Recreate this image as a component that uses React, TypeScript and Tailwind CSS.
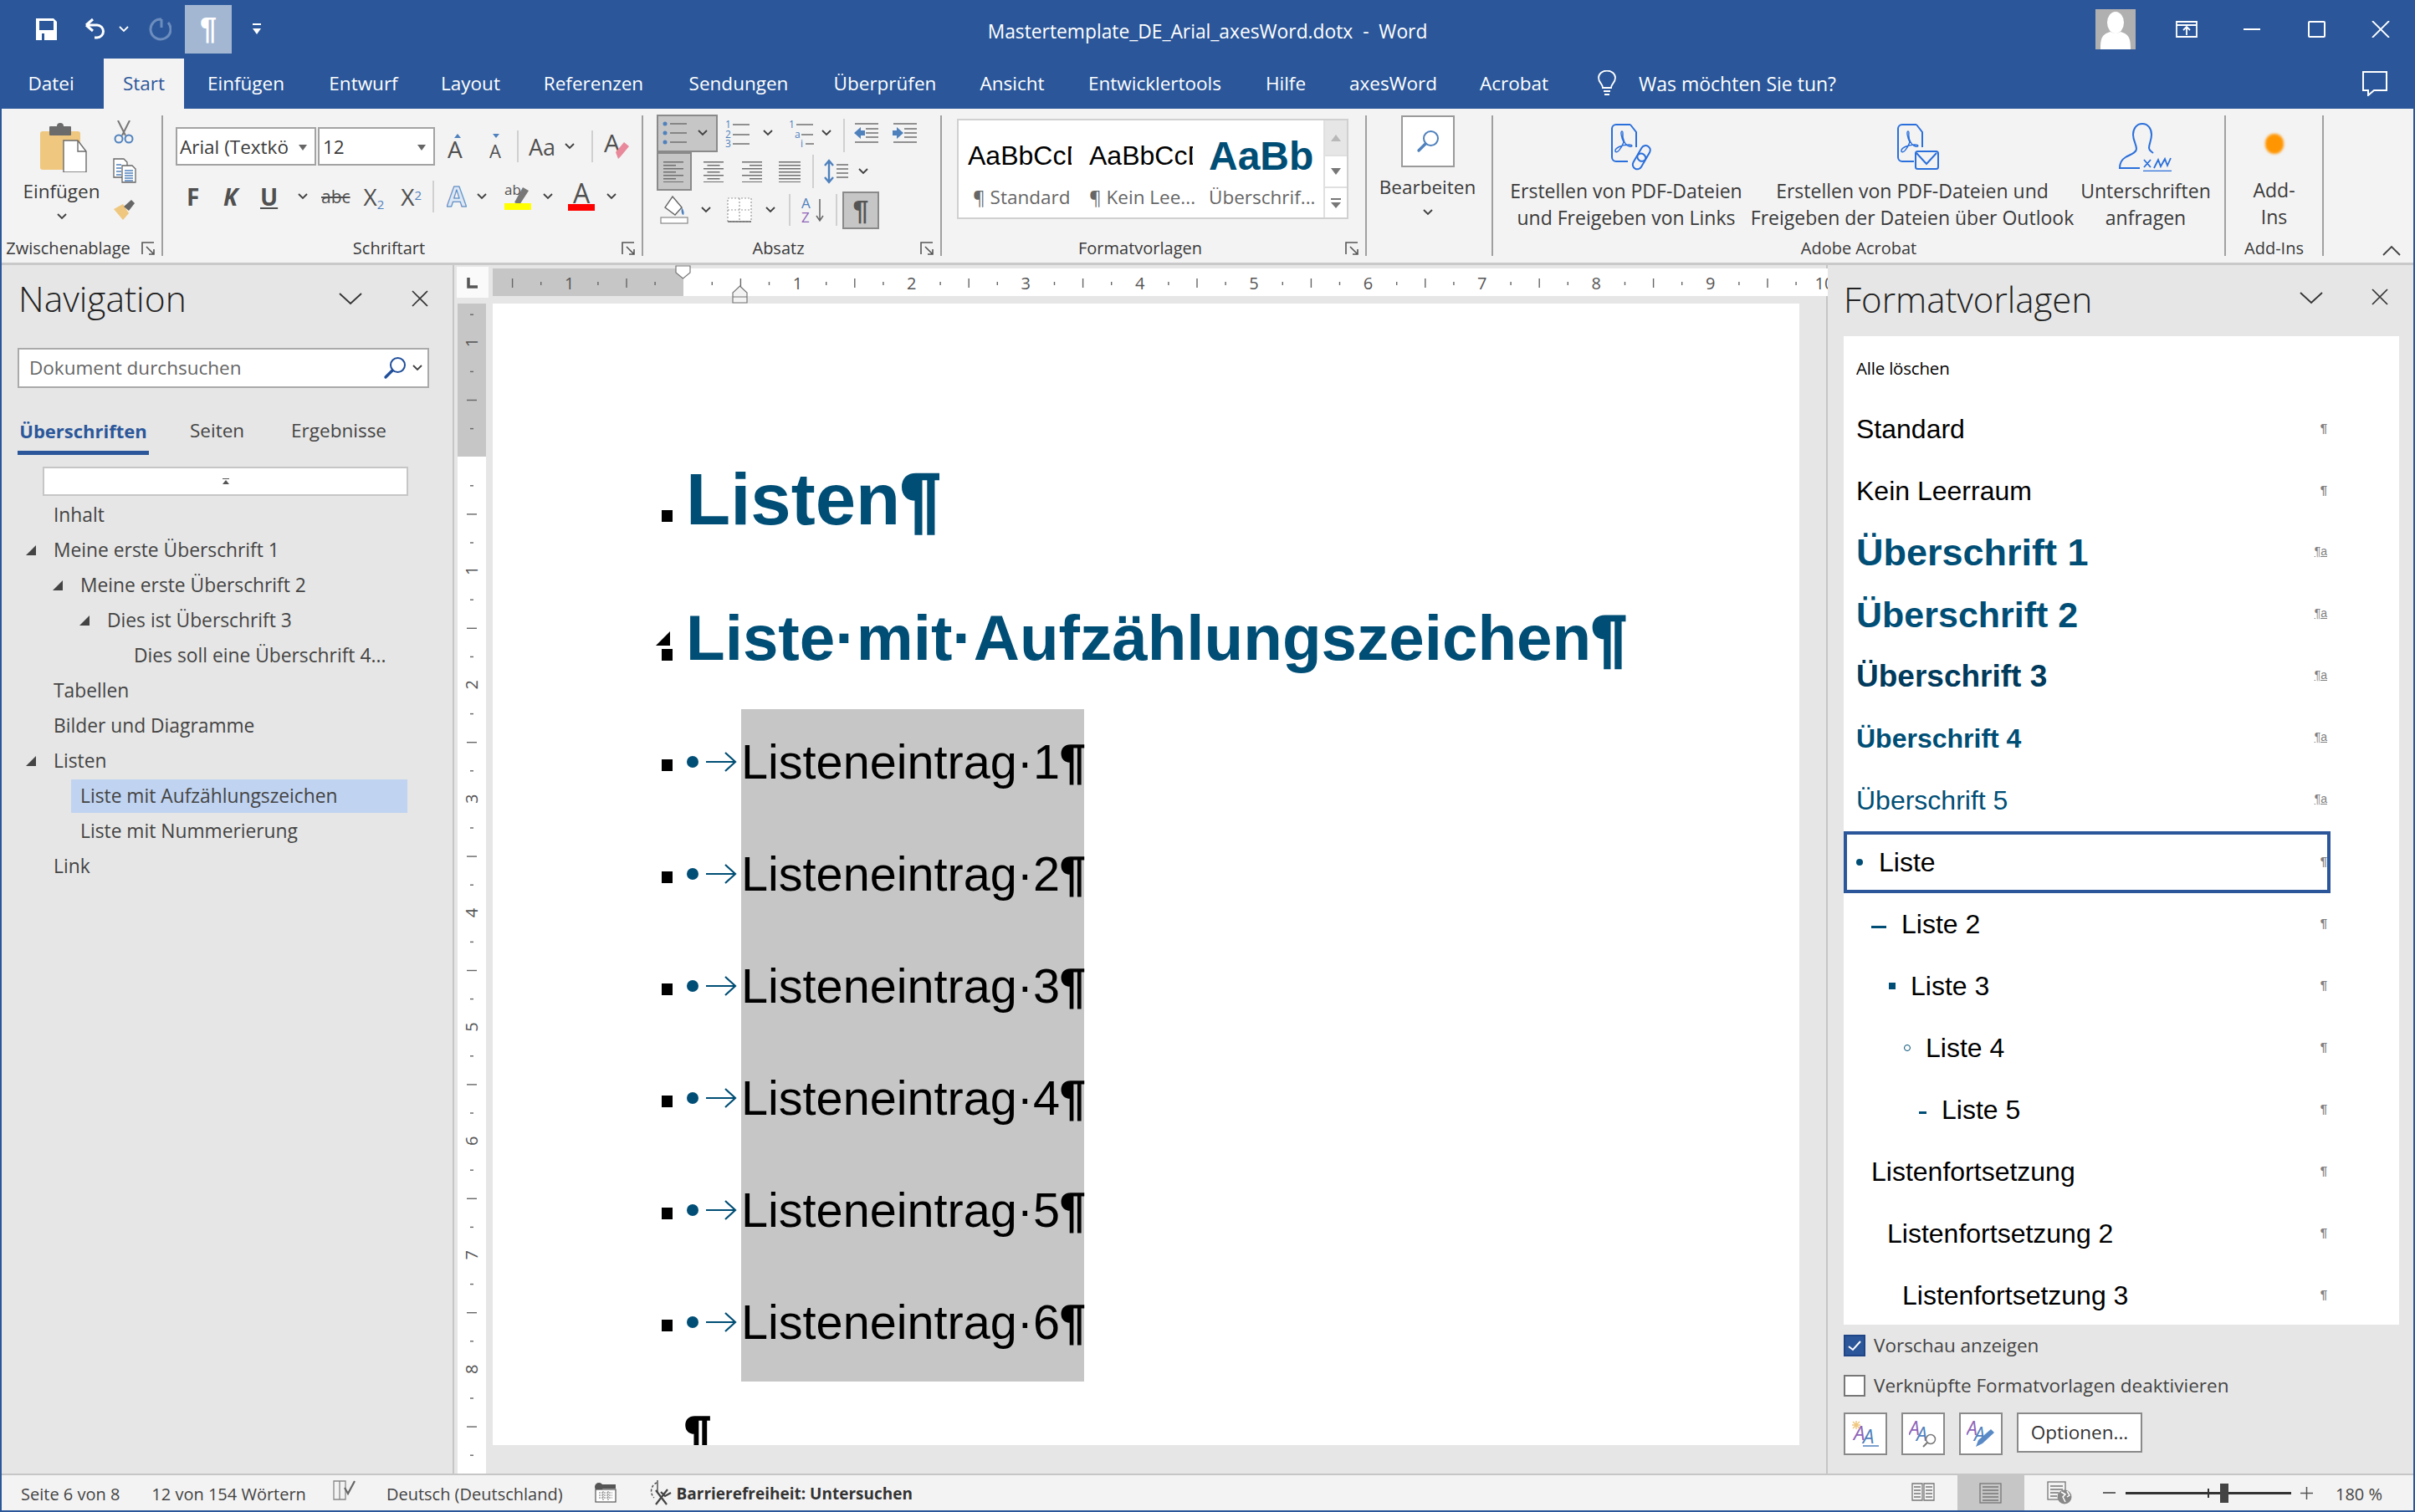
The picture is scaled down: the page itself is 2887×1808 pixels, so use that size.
import React from 'react';

const BLUE = '#2b579a';
const ICON = '#4f81bd';
const DARK = '#505050';

const Chev = ({ className = '', color = '#404040' }: { className?: string; color?: string }) => (
  <svg width="12" height="8" viewBox="0 0 12 8" className={`shrink-0 ${className}`}>
    <path d="M1 1l5 5 5-5" fill="none" stroke={color} strokeWidth="1.8" />
  </svg>
);

const Launcher = () => (
  <div className="w-[32px] flex justify-end pr-[7px]">
    <svg width="17" height="17" viewBox="0 0 17 17">
      <path d="M1 15V1h14M6 6l9 9M9 15h6V9" fill="none" stroke="#555" strokeWidth="1.6" />
    </svg>
  </div>
);

const GroupLabel = ({ text, launcher = true }: { text: string; launcher?: boolean }) => (
  <div className="mt-auto mb-[-3px] h-[24px] flex items-center">
    <div className="flex-1 text-center text-[20px] leading-[24px] whitespace-nowrap">{text}</div>
    {launcher && <Launcher />}
  </div>
);

const Lines = ({ x, ys, w, color = '#707070' }: { x: number; ys: number[]; w: number; color?: string }) => (
  <path d={ys.map((y) => `M${x} ${y}h${w}`).join('')} stroke={color} strokeWidth="1.5" fill="none" />
);

const VSep = ({ className = '' }: { className?: string }) => <div className={`w-[2px] bg-[#d0d0d0] shrink-0 ${className}`} />;

const Magnifier = ({ color = ICON }: { color?: string }) => (
  <svg width="28" height="28" viewBox="0 0 28 28">
    <circle cx="17.5" cy="10.5" r="8.5" fill="none" stroke={color} strokeWidth="2" />
    <path d="M11 17L3 25" stroke={color} strokeWidth="3.4" strokeLinecap="round" />
  </svg>
);

const Close = ({ size = 20 }: { size?: number }) => (
  <svg width={size} height={size} viewBox="0 0 20 20">
    <path d="M1 1l18 18M19 1L1 19" stroke="#333" strokeWidth="1.7" fill="none" />
  </svg>
);

const PaneChevron = () => (
  <svg width="28" height="15" viewBox="0 0 28 15">
    <path d="M1 1l13 12L27 1" stroke="#333" strokeWidth="1.8" fill="none" />
  </svg>
);

const AcrobatMark = () => (
  <path
    d="M14 9c-2 0 -1 7 2 13c-3 8 -8 14 -10 11c-1 -4 8 -8 16 -8c5 0 5 3 1 2c-5 -1 -9 -8 -8 -16c0 -2 0 -2 -1 -2z"
    fill="none"
    stroke="#2a6fdb"
    strokeWidth="1.4"
  />
);

const PdfDoc = () => (
  <path d="M24 1H7a5 5 0 0 0-5 5v34a5 5 0 0 0 5 5h14M24 1l7 9v18" fill="none" stroke="#2a6fdb" strokeWidth="2" />
);

const TitleBar = () => (
  <div className="h-[70px] grid grid-cols-[1fr_auto_1fr] items-center text-white">
    <div className="flex items-center pl-[43px]">
      <svg width="25" height="26" viewBox="0 0 25 26">
        <path d="M0 0h21l4 4v22H0z" fill="#fff" />
        <rect x="4" y="3" width="17" height="11" fill={BLUE} />
        <rect x="7" y="18" width="3" height="8" fill={BLUE} />
      </svg>
      <svg width="28" height="28" viewBox="0 0 28 28" className="ml-[32px]">
        <path d="M3 9l8-7M3 9l8 7M3 9h13a7.5 7.5 0 0 1 0 15h-3" fill="none" stroke="#fff" strokeWidth="3" />
      </svg>
      <Chev color="#fff" className="ml-[14px]" />
      <svg width="28" height="28" viewBox="0 0 28 28" className="ml-[23px]">
        <path d="M16 2a12 12 0 1 0 8 4M16 2v10" fill="none" stroke="#6c8dbd" strokeWidth="3" />
      </svg>
      <div className="ml-[16px] w-[56px] h-[58px] bg-[#a3b7d2] flex items-center justify-center font-['Liberation_Sans',sans-serif] font-bold text-[36px] leading-none">
        ¶
      </div>
      <svg width="12" height="16" viewBox="0 0 12 16" className="ml-[24px]">
        <path d="M1 1h10v2H1zM1 7h10l-5 7z" fill="#fff" />
      </svg>
    </div>
    <div className="text-[22.8px] whitespace-pre pt-[6px]">Mastertemplate_DE_Arial_axesWord.dotx  -  Word</div>
    <div className="flex items-center justify-end pr-[30px]">
      <div className="w-[48px] h-[48px] bg-[#b0b0b0] overflow-hidden">
        <svg width="48" height="48" viewBox="0 0 48 48">
          <ellipse cx="24" cy="16" rx="10" ry="13" fill="#fff" />
          <path d="M6 48c0-14 2-18 12-21c3 2 9 2 12 0c10 3 12 7 12 21z" fill="#fff" />
        </svg>
      </div>
      <svg width="26" height="20" viewBox="0 0 26 20" className="ml-[48px]">
        <path d="M1 1h24v18H1zM1 5h24M13 17V8M9 11l4-4 4 4" fill="none" stroke="#fff" strokeWidth="1.8" />
      </svg>
      <div className="ml-[55px] w-[20px] h-[2px] bg-white" />
      <div className="ml-[57px] w-[21px] h-[20px] border-2 border-white rounded-[2px]" />
      <svg width="22" height="20" viewBox="0 0 22 20" className="ml-[55px]">
        <path d="M1 0l20 20M21 0L1 20" stroke="#fff" strokeWidth="1.8" />
      </svg>
    </div>
  </div>
);

const TABS: [string, string][] = [
  ['Datei', 'w-[122px] pr-[4px]'],
  ['Start', 'w-[96px] bg-[#f3f3f3] text-[#2b579a]'],
  ['Einfügen', 'w-[148px]'],
  ['Entwurf', 'w-[133px]'],
  ['Layout', 'w-[123px]'],
  ['Referenzen', 'w-[171px]'],
  ['Sendungen', 'w-[176px]'],
  ['Überprüfen', 'w-[174px]'],
  ['Ansicht', 'w-[130px]'],
  ['Entwicklertools', 'w-[211px]'],
  ['Hilfe', 'w-[102px]'],
  ['axesWord', 'w-[155px]'],
  ['Acrobat', 'w-[134px]'],
];

const TabRow = () => (
  <div className="h-[60px] flex items-stretch pl-[2px] text-white">
    {TABS.map(([label, cls]) => (
      <div key={label} className={`flex items-center justify-center whitespace-nowrap ${cls}`}>
        {label}
      </div>
    ))}
    <div className="ml-[33px] flex items-center">
      <svg width="22" height="32" viewBox="0 0 22 32">
        <path d="M6 21c0-5-5-6-5-12a10 8.500 0 0 1 20 0c0 6-5 7-5 12zM7 25h8M8 29h6" fill="none" stroke="#fff" strokeWidth="1.8" />
      </svg>
    </div>
    <div className="ml-[27px] flex items-center whitespace-nowrap text-[23px]">Was möchten Sie tun?</div>
    <div className="ml-auto mr-[33px] flex items-center">
      <svg width="30" height="30" viewBox="0 0 30 30">
        <path d="M1 1h28v22H14l-7 6v-6H1z" fill="none" stroke="#fff" strokeWidth="2" />
      </svg>
    </div>
  </div>
);

const ClipboardGroup = () => (
  <div className="w-[193px] flex flex-col border-r-2 border-[#a0a0a0] shrink-0">
    <div className="flex">
      <div className="w-[134px] flex flex-col items-center pt-[8px] pl-[18px] pr-[1px]">
        <svg width="56" height="60" viewBox="0 0 56 60" className="-ml-[3px]">
          <rect x="0" y="11" width="48" height="46" rx="3" fill="#efc77f" />
          <rect x="11" y="5" width="26" height="11" rx="1" fill="#6b6b6b" />
          <circle cx="24" cy="5" r="4" fill="#6b6b6b" />
          <path d="M28 22h17l10 13v25H28z" fill="#fff" stroke="#6b6b6b" strokeWidth="1.4" />
          <path d="M45 22v13h10" fill="none" stroke="#6b6b6b" strokeWidth="1.4" />
        </svg>
        <div className="-ml-[8px] mt-[8px] leading-[30px]">Einfügen</div>
        <Chev className="-ml-[8px] mt-[11px]" />
      </div>
      <div className="flex flex-col items-start pt-[6px] -ml-[1px]">
        <svg width="26" height="28" viewBox="0 0 26 28">
          <path d="M6 0l9 18M20 0l-9 18" stroke="#777" strokeWidth="2" />
          <circle cx="7" cy="22" r="4.500" fill="none" stroke={ICON} strokeWidth="2" />
          <circle cx="19" cy="22" r="4.500" fill="none" stroke={ICON} strokeWidth="2" />
        </svg>
        <svg width="28" height="30" viewBox="0 0 28 30" className="mt-[17px]">
          <path d="M1 1h12l4 4v18H1z" fill="#fff" stroke="#666" strokeWidth="1.300" />
          <path d="M11 9h12l4 4v16H11z" fill="#fff" stroke="#666" strokeWidth="1.300" />
          <Lines x={4} ys={[8, 12, 16, 20]} w={6} color={ICON} />
          <Lines x={14} ys={[15, 18, 21, 24, 27]} w={10} color={ICON} />
        </svg>
        <svg width="27" height="24" viewBox="0 0 27 24" className="mt-[20px]">
          <path d="M1 11l11-6 7 11-7 8z" fill="#efc77f" />
          <path d="M13 8l9-8 4 4-7 9z" fill="#666" />
        </svg>
      </div>
    </div>
    <GroupLabel text="Zwischenablage" />
  </div>
);

const FontGroup = () => (
  <div className="w-[574px] flex flex-col border-r-2 border-[#a0a0a0] shrink-0">
    <div className="pl-[15px]">
      <div className="mt-[14px] h-[46px] flex items-center">
        <div className="w-[168px] h-[46px] bg-white border-2 border-[#a3a3a3] flex items-center justify-between pl-[3px] pr-[9px] pt-[2px] font-normal">
          <span className="whitespace-nowrap">Arial (Textkö</span>
          <svg width="10" height="7" viewBox="0 0 10 7">
            <path d="M0 0h10L5 7z" fill="#666" />
          </svg>
        </div>
        <div className="ml-[2px] w-[140px] h-[46px] bg-white border-2 border-[#a3a3a3] flex items-center justify-between pl-[4px] pr-[9px] pt-[2px]">
          <span>12</span>
          <svg width="10" height="7" viewBox="0 0 10 7">
            <path d="M0 0h10L5 7z" fill="#666" />
          </svg>
        </div>
        <svg width="20" height="34" viewBox="0 0 20 34" className="ml-[15px]">
          <path d="M12 2l4 5H8z" fill={ICON} />
          <text x="0" y="31" fontFamily="Open Sans" fontSize="28" fill={DARK}>A</text>
        </svg>
        <svg width="15" height="34" viewBox="0 0 15 34" className="ml-[30px]">
          <path d="M8 7l4-5H4z" fill={ICON} />
          <text x="0" y="31" fontFamily="Open Sans" fontSize="22" fill={DARK}>A</text>
        </svg>
        <VSep className="ml-[18px] h-[38px]" />
        <span className="ml-[12px] text-[27px] text-[#505050] leading-none">Aa</span>
        <Chev className="ml-[11px]" />
        <VSep className="ml-[20px] h-[38px]" />
        <svg width="32" height="34" viewBox="0 0 32 34" className="ml-[13px]">
          <text x="0" y="24" fontFamily="Open Sans" fontSize="30" fill={DARK}>A</text>
          <path d="M14 24l10-12 6 5-10 12-3 3z" fill="#e8889a" />
        </svg>
      </div>
      <div className="mt-[14px] h-[46px] flex items-center text-[#505050]">
        <span className="ml-[13px] w-[18px] text-[28px] font-bold font-['Open_Sans',sans-serif] leading-none">F</span>
        <span className="ml-[26px] w-[24px] text-[28px] font-bold italic leading-none">K</span>
        <span className="ml-[20px] w-[24px] text-[28px] font-bold underline underline-offset-[2px] decoration-2 leading-none">U</span>
        <Chev className="ml-[21px]" />
        <span className="ml-[16px] text-[21px] line-through leading-none">abc</span>
        <span className="ml-[16px] text-[28px] leading-none">
          X<sub className="text-[15px] text-[#4f81bd]">2</sub>
        </span>
        <span className="ml-[20px] text-[28px] leading-none">
          X<sup className="text-[15px] text-[#4f81bd]">2</sup>
        </span>
        <VSep className="ml-[13px] h-[38px]" />
        <svg width="24" height="30" viewBox="0 0 24 30" className="ml-[15px]">
          <text x="0" y="27" fontFamily="Open Sans" fontSize="34" fontWeight="700" fill="#dce8f6" stroke={ICON} strokeWidth="1">A</text>
        </svg>
        <Chev className="ml-[12px]" />
        <svg width="32" height="32" viewBox="0 0 32 32" className="ml-[21px]">
          <text x="0" y="14" fontFamily="Open Sans" fontSize="17" fill={DARK}>ab</text>
          <path d="M12 23l10-18 7 4-11 17z" fill="#777" />
          <rect x="0" y="24" width="32" height="8" fill="#ffff00" />
        </svg>
        <Chev className="ml-[14px]" />
        <div className="ml-[18px] w-[32px] h-[34px] flex flex-col items-center">
          <span className="text-[32px] leading-[26px] text-[#505050]">A</span>
          <div className="mt-auto w-[32px] h-[8px] bg-[#ff0000]" />
        </div>
        <Chev className="ml-[14px]" />
      </div>
    </div>
    <GroupLabel text="Schriftart" />
  </div>
);

const ToggleBox = ({ className, children }: { className: string; children: React.ReactNode }) => (
  <div className={`bg-[#c6c6c6] border-2 border-[#8a8a8a] flex items-center shrink-0 ${className}`}>{children}</div>
);

const AlignIcon = ({ kind, className = '' }: { kind: 'l' | 'c' | 'r' | 'j'; className?: string }) => {
  const rows = [24, 15, 24, 15, 24, 15, 24];
  return (
    <svg width="26" height="26" viewBox="0 0 26 26" className={className}>
      {rows.map((w, i) => {
        const width = kind === 'j' ? 26 : w;
        const x = kind === 'l' || kind === 'j' ? 0 : kind === 'c' ? (26 - width) / 2 : 26 - width;
        return <rect key={i} x={x} y={1 + i * 4} width={width} height="1.500" fill="#707070" />;
      })}
    </svg>
  );
};

const ParagraphGroup = () => (
  <div className="w-[357px] flex flex-col border-r-2 border-[#a0a0a0] shrink-0">
    <div className="pl-[16px] -mt-[2px]">
      <div className="h-[46px] flex items-center">
        <ToggleBox className="w-[73px] h-[45px] justify-between pl-[4px] pr-[10px]">
          <svg width="30" height="34" viewBox="0 0 30 34">
            <circle cx="4" cy="6" r="2.500" fill={ICON} />
            <circle cx="4" cy="17" r="2.500" fill={ICON} />
            <circle cx="4" cy="28" r="2.500" fill={ICON} />
            <Lines x={10} ys={[6, 17, 28]} w={20} />
          </svg>
          <Chev />
        </ToggleBox>
        <svg width="30" height="36" viewBox="0 0 30 36" className="ml-[9px]">
          <text x="0" y="12" fontFamily="Open Sans" fontSize="12" fill={ICON}>1</text>
          <text x="0" y="24" fontFamily="Open Sans" fontSize="12" fill={ICON}>2</text>
          <text x="0" y="35" fontFamily="Open Sans" fontSize="12" fill={ICON}>3</text>
          <Lines x={9} ys={[8, 20, 31]} w={20} />
        </svg>
        <Chev className="ml-[15px]" />
        <svg width="30" height="36" viewBox="0 0 30 36" className="ml-[19px]">
          <text x="0" y="12" fontFamily="Open Sans" fontSize="12" fill={ICON}>1</text>
          <text x="7" y="24" fontFamily="Open Sans" fontSize="12" fill={ICON}>a</text>
          <text x="14" y="35" fontFamily="Open Sans" fontSize="12" fill={ICON}>i</text>
          <Lines x={9} ys={[8]} w={20} />
          <Lines x={15} ys={[20]} w={14} />
          <Lines x={20} ys={[31]} w={10} />
        </svg>
        <Chev className="ml-[9px]" />
        <VSep className="ml-[14px] h-[40px] mt-[6px]" />
        <svg width="30" height="24" viewBox="0 0 30 24" className="ml-[11px]">
          <Lines x={1} ys={[1, 23]} w={28} />
          <Lines x={14} ys={[7, 12, 17]} w={15} />
          <path d="M0 12l8-7v4h5v6H8v4z" fill={ICON} />
        </svg>
        <svg width="30" height="24" viewBox="0 0 30 24" className="ml-[16px]">
          <Lines x={1} ys={[1, 23]} w={28} />
          <Lines x={14} ys={[7, 12, 17]} w={15} />
          <path d="M13 12L5 5v4H0v6h5v4z" fill={ICON} />
        </svg>
      </div>
      <div className="h-[46px] flex items-center">
        <ToggleBox className="w-[42px] h-[46px] justify-center">
          <AlignIcon kind="l" />
        </ToggleBox>
        <AlignIcon kind="c" className="ml-[13px]" />
        <AlignIcon kind="r" className="ml-[19px]" />
        <AlignIcon kind="j" className="ml-[20px]" />
        <VSep className="ml-[14px] h-[40px]" />
        <svg width="30" height="30" viewBox="0 0 30 30" className="ml-[12px]">
          <path d="M6 3v24M1 8l5-6 5 6M1 22l5 6 5-6" fill="none" stroke={ICON} strokeWidth="2.400" />
          <Lines x={15} ys={[7, 12, 17, 22]} w={14} />
        </svg>
        <Chev className="ml-[11px]" />
      </div>
      <div className="h-[46px] flex items-center">
        <svg width="34" height="34" viewBox="0 0 34 34" className="ml-[4px]">
          <path d="M15 1l11 13-8 9-12-9z" fill="#fff" stroke="#666" strokeWidth="1.400" />
          <path d="M26 14c3 4 3 8 2 9c-2 0-3-4-2-9z" fill={ICON} />
          <rect x="1" y="26" width="32" height="7" fill="#fff" stroke="#888" strokeWidth="1.200" />
        </svg>
        <Chev className="ml-[15px]" />
        <svg width="30" height="30" viewBox="0 0 30 30" className="ml-[19px]">
          <path d="M1 1h28v28H1zM15 1v28M1 15h28" fill="#fff" stroke="#999" strokeWidth="1.200" strokeDasharray="2 2" />
          <path d="M1 29h28" stroke="#666" strokeWidth="1.500" />
        </svg>
        <Chev className="ml-[16px]" />
        <VSep className="ml-[16px] h-[38px]" />
        <svg width="30" height="32" viewBox="0 0 30 32" className="ml-[13px]">
          <text x="0" y="14" fontFamily="Open Sans" fontSize="17" fill={ICON}>A</text>
          <text x="0" y="31" fontFamily="Open Sans" fontSize="17" fill="#8e63b8">Z</text>
          <path d="M22 3v25M18 23l4 6 4-6" fill="none" stroke="#666" strokeWidth="1.500" />
        </svg>
        <VSep className="ml-[11px] h-[38px]" />
        <ToggleBox className="ml-[6px] w-[44px] h-[45px] justify-center">
          <span className="font-['Liberation_Sans',sans-serif] font-bold text-[34px] text-[#555] leading-none">¶</span>
        </ToggleBox>
      </div>
    </div>
    <GroupLabel text="Absatz" />
  </div>
);

const GalleryArrow = ({ kind }: { kind: 'up' | 'down' | 'more' }) => (
  <svg width="14" height="14" viewBox="0 0 14 14">
    {kind === 'up' && <path d="M7 3l6 8H1z" fill="#b8b8b8" />}
    {kind === 'down' && <path d="M7 11l6-8H1z" fill="#777" />}
    {kind === 'more' && <path d="M1 1h12v2H1zM7 13l6-7H1z" fill="#777" />}
  </svg>
);

const StylesGroup = () => (
  <div className="w-[508px] flex flex-col border-r-2 border-[#a0a0a0] shrink-0">
    <div className="ml-[18px] mt-[4px] w-[468px] h-[120px] bg-white border-2 border-[#d0d0d0] flex">
      <div className="flex-1 flex pl-[11px]">
        <div className="w-[145px]">
          <div className="w-[124px] h-[70px] overflow-hidden whitespace-nowrap font-['Liberation_Sans',sans-serif] text-[32px] leading-[85px] text-black">AaBbCcDd</div>
          <div className="mt-[8px] pl-[6px] text-[#666] whitespace-nowrap leading-[28px]">¶ Standard</div>
        </div>
        <div className="w-[143px]">
          <div className="w-[124px] h-[70px] overflow-hidden whitespace-nowrap font-['Liberation_Sans',sans-serif] text-[32px] leading-[85px] text-black">AaBbCcDd</div>
          <div className="mt-[8px] text-[#666] whitespace-nowrap leading-[28px]">¶ Kein Lee...</div>
        </div>
        <div className="w-[128px]">
          <div className="h-[70px] overflow-hidden whitespace-nowrap font-['Liberation_Sans',sans-serif] font-bold text-[48px] leading-[85px] text-[#004e75]">AaBb</div>
          <div className="mt-[8px] text-[#666] whitespace-nowrap leading-[28px]">Überschrif...</div>
        </div>
      </div>
      <div className="w-[28px] flex flex-col border-l-2 border-[#e0e0e0]">
        <div className="h-[41px] bg-[#e6e6e6] flex items-center justify-center">
          <GalleryArrow kind="up" />
        </div>
        <div className="h-[38px] border-t-2 border-[#e0e0e0] flex items-center justify-center">
          <GalleryArrow kind="down" />
        </div>
        <div className="flex-1 border-t-2 border-[#e0e0e0] flex items-center justify-center">
          <GalleryArrow kind="more" />
        </div>
      </div>
    </div>
    <GroupLabel text="Formatvorlagen" />
  </div>
);

const EditGroup = () => (
  <div className="w-[151px] flex flex-col items-center border-r-2 border-[#a0a0a0] shrink-0">
    <div className="w-[64px] h-[62px] bg-white border-2 border-[#9a9a9a] flex items-center justify-center -ml-[4px]">
      <Magnifier />
    </div>
    <div className="mt-[9px] leading-[30px] -ml-[4px]">Bearbeiten</div>
    <Chev className="mt-[11px] -ml-[4px]" />
  </div>
);

const AcrobatItem = ({ icon, lines, className, iconClass = '' }: { icon: React.ReactNode; lines: [string, string]; className: string; iconClass?: string }) => (
  <div className={`flex flex-col items-center shrink-0 ${className}`}>
    <div className={`h-[76px] flex items-center ${iconClass}`}>{icon}</div>
    <div className="text-center text-[23px] leading-[32px] whitespace-nowrap mt-[-2px]">
      {lines[0]}
      <br />
      {lines[1]}
    </div>
  </div>
);

const AcrobatGroup = () => (
  <div className="w-[876px] flex flex-col border-r-2 border-[#a0a0a0] shrink-0">
    <div className="flex pl-[19px]">
      <AcrobatItem
        className="w-[280px]"
        iconClass="ml-[14px]"
        lines={['Erstellen von PDF-Dateien', 'und Freigeben von Links']}
        icon={
          <svg width="52" height="56" viewBox="0 0 52 56">
            <PdfDoc />
            <AcrobatMark />
            <g transform="rotate(-60 38 40)" fill="none" stroke="#2a6fdb" strokeWidth="2">
              <rect x="22" y="34" width="20" height="11" rx="5.500" />
              <rect x="33" y="34" width="20" height="11" rx="5.500" />
            </g>
          </svg>
        }
      />
      <AcrobatItem
        className="ml-[8px] w-[388px]"
        iconClass="ml-[14px]"
        lines={['Erstellen von PDF-Dateien und', 'Freigeben der Dateien über Outlook']}
        icon={
          <svg width="52" height="56" viewBox="0 0 52 56">
            <PdfDoc />
            <AcrobatMark />
            <rect x="23" y="33" width="27" height="21" rx="2.500" fill="#f3f3f3" stroke="#2a6fdb" strokeWidth="2" />
            <path d="M24 35l12 13 12-13" fill="none" stroke="#2a6fdb" strokeWidth="2" />
          </svg>
        }
      />
      <AcrobatItem
        className="ml-[9px] w-[152px]"
        lines={['Unterschriften', 'anfragen']}
        icon={
          <svg width="64" height="58" viewBox="0 0 64 58">
            <path d="M28 1c-7 0-11 6-11 13c0 7 4 12 4 17c0 5-8 7-13 10c-5 3-7 7-7 13h24M28 1c7 0 11 6 11 13c0 7-3 11-3 16c0 3 3 4 5 6" fill="none" stroke="#2a6fdb" strokeWidth="2" />
            <path d="M30 44l8 9M38 44l-8 9M42 54l5-10 3 8 5-9 3 8 4-9" fill="none" stroke="#2a6fdb" strokeWidth="1.800" />
            <path d="M29 58h34" stroke="#2a6fdb" strokeWidth="2.500" />
          </svg>
        }
      />
    </div>
    <GroupLabel text="Adobe Acrobat" launcher={false} />
  </div>
);

const AddInsGroup = () => (
  <div className="w-[117px] flex flex-col items-center border-r-2 border-[#a0a0a0] shrink-0">
    <div className="h-[76px] flex items-center -mt-[4px]">
      <div className="w-[22px] h-[24px] rounded-full bg-[#ff9500] blur-[1.5px]" />
    </div>
    <div className="text-center text-[23px] leading-[32px] mt-[1px]">
      Add-
      <br />
      Ins
    </div>
    <div className="mt-auto mb-[-3px] h-[24px] text-[20px] leading-[24px]">Add-Ins</div>
  </div>
);

const Ribbon = () => (
  <div className="h-[184px] py-[8px] flex bg-[#f3f3f3] text-[#3a3a3a] relative">
    <ClipboardGroup />
    <FontGroup />
    <ParagraphGroup />
    <StylesGroup />
    <EditGroup />
    <AcrobatGroup />
    <AddInsGroup />
    <div className="flex-1 flex items-end justify-end pr-[15px]">
      <svg width="22" height="13" viewBox="0 0 22 13">
        <path d="M1 12L11 2l10 10" fill="none" stroke="#444" strokeWidth="1.800" />
      </svg>
    </div>
  </div>
);

const TREE: { label: string; row: string; arrow?: boolean }[] = [
  { label: 'Inhalt', row: 'h-[42px] pl-[62px]' },
  { label: 'Meine erste Überschrift 1', row: 'h-[42px] pl-[29px]', arrow: true },
  { label: 'Meine erste Überschrift 2', row: 'h-[42px] pl-[61px]', arrow: true },
  { label: 'Dies ist Überschrift 3', row: 'h-[42px] pl-[93px]', arrow: true },
  { label: 'Dies soll eine Überschrift 4...', row: 'h-[42px] pl-[158px]' },
  { label: 'Tabellen', row: 'h-[42px] pl-[62px]' },
  { label: 'Bilder und Diagramme', row: 'h-[42px] pl-[62px]' },
  { label: 'Listen', row: 'h-[42px] pl-[29px]', arrow: true },
  { label: 'Liste mit Aufzählungszeichen', row: 'h-[40px] my-[1px] ml-[83px] w-[402px] pl-[11px] bg-[#c0d3f0]' },
  { label: 'Liste mit Nummerierung', row: 'h-[42px] pl-[94px]' },
  { label: 'Link', row: 'h-[42px] pl-[62px]' },
];

const NavPane = () => (
  <div className="w-[541px] shrink-0 border-r-2 border-[#c6c6c6] text-[#444]">
    <div className="h-[99px] flex items-center pl-[20px] pr-[29px]">
      <div className="text-[42.5px] font-light text-[#222] leading-none -mt-[18px]">Navigation</div>
      <div className="ml-auto -mt-[19px]">
        <PaneChevron />
      </div>
      <div className="ml-[59px] -mt-[19px]">
        <Close />
      </div>
    </div>
    <div className="ml-[19px] w-[492px] h-[48px] bg-white border-2 border-[#aaaaaa] flex items-center pl-[12px] pr-[6px] text-[#666]">
      <span className="whitespace-nowrap">Dokument durchsuchen</span>
      <div className="ml-auto">
        <Magnifier color="#1f4e9a" />
      </div>
      <Chev className="ml-[7px]" />
    </div>
    <div className="mt-[33px] ml-[19px] flex items-start h-[47px]">
      <div className="w-[157px] h-[47px] border-b-[5px] border-[#2b579a] font-bold text-[#2b579a] text-center leading-[36px] text-[22px] whitespace-nowrap">
        Überschriften
      </div>
      <div className="ml-[49px] leading-[36px]">Seiten</div>
      <div className="ml-[56px] leading-[36px]">Ergebnisse</div>
    </div>
    <div className="mt-[14px] ml-[49px] w-[437px] h-[35px] bg-white border-2 border-[#c6c6c6] flex items-center justify-center">
      <svg width="8" height="7" viewBox="0 0 8 7">
        <path d="M0 0h8v1H0zM4 2l4 5H0z" fill="#555" />
      </svg>
    </div>
    <div className="text-[22.8px] pt-[2px]">
      {TREE.map((t) => (
        <div key={t.label} className={`flex items-center whitespace-nowrap ${t.row}`}>
          {t.arrow && (
            <svg width="12" height="12" viewBox="0 0 12 12" className="mr-[21px] shrink-0">
              <path d="M12 0v12H0z" fill="#444" />
            </svg>
          )}
          {t.label}
        </div>
      ))}
    </div>
  </div>
);

const RULER_FONT = 'Open Sans';
const UNIT = 136.4;

const HRuler = () => {
  const zero = 228;
  const ticks: React.ReactNode[] = [];
  for (let q = -6; q <= 42; q++) {
    const x = zero + (q * UNIT) / 4;
    if (x < 2 || q === 0) continue;
    if (q % 4 === 0) {
      ticks.push(
        <text key={q} x={x} y="29" textAnchor="middle" fontFamily={RULER_FONT} fontSize="20" fill="#555">
          {Math.abs(q / 4)}
        </text>
      );
    } else if (q % 2 === 0) {
      ticks.push(<rect key={q} x={x - 0.5} y="16" width="1.400" height="11" fill="#666" />);
    } else {
      ticks.push(<rect key={q} x={x - 0.5} y="20" width="1.400" height="4" fill="#666" />);
    }
  }
  return (
    <svg width="1596" height="46" viewBox="0 0 1596 46" className="shrink-0 overflow-hidden">
      <rect x="0" y="4" width={zero} height="33" fill="#c6c6c6" />
      <rect x={zero} y="4" width={1596 - zero} height="33" fill="#fff" />
      {ticks}
      <path d="M219 1h17v8l-8.500 7-8.500-7z" fill="#fff" stroke="#777" strokeWidth="1.200" />
      <path d="M295.500 25l8.500 8v12h-17V33zM287 38h17" fill="#f3f3f3" stroke="#777" strokeWidth="1.200" />
    </svg>
  );
};

const VRuler = () => {
  const zero = 183;
  const ticks: React.ReactNode[] = [];
  for (let q = -5; q <= 36; q++) {
    const y = zero + (q * UNIT) / 4;
    if (q === 0) continue;
    if (q % 4 === 0) {
      ticks.push(
        <text key={q} x="17" y={y + 7} textAnchor="middle" fontFamily={RULER_FONT} fontSize="20" fill="#555" transform={`rotate(-90 17 ${y})`}>
          {Math.abs(q / 4)}
        </text>
      );
    } else if (q % 2 === 0) {
      ticks.push(<rect key={q} x="11" y={y} width="12" height="1.400" fill="#666" />);
    } else {
      ticks.push(<rect key={q} x="15" y={y} width="4" height="1.400" fill="#666" />);
    }
  }
  return (
    <svg width="34" height="1399" viewBox="0 0 34 1399" className="shrink-0">
      <rect x="0" y="0" width="34" height={zero} fill="#c6c6c6" />
      <rect x="0" y={zero} width="34" height={1399 - zero} fill="#fff" />
      {ticks}
    </svg>
  );
};

const ListRow = ({ n }: { n: number }) => (
  <div className="h-[134px] flex">
    <div className="w-[95px] shrink-0 pt-[50px]">
      <svg width="92" height="30" viewBox="0 0 92 30">
        <rect x="0" y="10" width="13" height="14" fill="#000" />
        <circle cx="37" cy="13" r="7" fill="#004e75" />
        <path d="M53 13h35M76 2l12 11-12 11" fill="none" stroke="#004e75" strokeWidth="2.200" />
      </svg>
    </div>
    <div className="w-[410px] bg-[#c6c6c6] text-[57.6px] leading-[126px] text-black whitespace-nowrap">
      Listeneintrag·{n}
      <span className="[-webkit-text-stroke:1.5px_#000]">¶</span>
    </div>
  </div>
);

const Page = () => (
  <div className="w-[1562px] h-[365px] grow bg-white overflow-hidden pl-[202px] pt-[184px] font-['Liberation_Sans',sans-serif]">
    <div className="h-[100px] flex">
      <div className="w-[29px] shrink-0 pt-[63px]">
        <div className="w-[13px] h-[14px] bg-black" />
      </div>
      <div className="text-[87px] leading-[100px] font-bold text-[#004e75] whitespace-nowrap">
        Listen<span className="[-webkit-text-stroke:2.5px_#004e75]">¶</span>
      </div>
    </div>
    <div className="mt-[71px] h-[90px] flex">
      <div className="w-[29px] shrink-0 pt-[37px]">
        <svg width="20" height="36" viewBox="0 0 20 36" className="-ml-[7px]">
          <path d="M17 0v17H0z" fill="#000" />
          <rect x="7" y="21" width="13" height="14" fill="#000" />
        </svg>
      </div>
      <div className="text-[76.4px] leading-[90px] font-bold text-[#004e75] whitespace-nowrap">
        Liste·mit·Aufzählungszeichen<span className="[-webkit-text-stroke:2.5px_#004e75]">¶</span>
      </div>
    </div>
    <div className="mt-[40px]">
      {[1, 2, 3, 4, 5, 6].map((n) => (
        <ListRow key={n} n={n} />
      ))}
    </div>
    <div className="mt-[22px] ml-[27px] text-[57.6px] leading-[80px] font-bold text-black [-webkit-text-stroke:1.5px_#000]">¶</div>
  </div>
);

const Center = () => (
  <div className="w-[1642px] shrink-0 border-r-2 border-[#c6c6c6] flex flex-col">
    <div className="h-[46px] flex">
      <div className="w-[46px] shrink-0 pl-[3px] pt-[2px]">
        <div className="w-[38px] h-[37px] bg-[#fafafa] flex items-center justify-center">
          <svg width="14" height="14" viewBox="0 0 14 14">
            <path d="M2 1v11h11" fill="none" stroke="#555" strokeWidth="3.500" />
          </svg>
        </div>
      </div>
      <HRuler />
    </div>
    <div className="flex-1 flex overflow-hidden">
      <div className="w-[46px] shrink-0 pl-[4px]">
        <VRuler />
      </div>
      <div className="flex flex-col">
        <Page />
        <div className="h-[34px]" />
      </div>
    </div>
  </div>
);

const PILCROW = 'para';
const LINKED = 'linked';

const Bullet = ({ kind }: { kind: string }) => {
  if (kind === 'dot') return <div className="w-[8px] h-[8px] rounded-full bg-[#004e75]" />;
  if (kind === 'dash') return <div className="w-[18px] h-[3px] bg-[#004e75] mt-[6px]" />;
  if (kind === 'square') return <div className="w-[8px] h-[8px] bg-[#004e75]" />;
  if (kind === 'ring') return <div className="w-[8px] h-[8px] rounded-full border-[1.5px] border-[#004e75]" />;
  return <div className="w-[9px] h-[3px] bg-[#004e75] mt-[6px]" />;
};

const STYLES: { label: string; cls: string; pad: string; mark: string; bullet?: string; box?: string; active?: boolean }[] = [
  { label: 'Standard', cls: 'text-[32px] text-black', pad: 'pl-[15px]', mark: PILCROW },
  { label: 'Kein Leerraum', cls: 'text-[32px] text-black', pad: 'pl-[15px]', mark: PILCROW },
  { label: 'Überschrift 1', cls: 'text-[45px] font-bold text-[#004e75]', pad: 'pl-[15px]', mark: LINKED },
  { label: 'Überschrift 2', cls: 'text-[43px] font-bold text-[#004e75]', pad: 'pl-[15px]', mark: LINKED },
  { label: 'Überschrift 3', cls: 'text-[37px] font-bold text-[#003a5c]', pad: 'pl-[15px]', mark: LINKED },
  { label: 'Überschrift 4', cls: 'text-[32px] font-bold text-[#004e75]', pad: 'pl-[15px]', mark: LINKED },
  { label: 'Überschrift 5', cls: 'text-[32px] text-[#004e75]', pad: 'pl-[15px]', mark: LINKED },
  { label: 'Liste', cls: 'text-[32px] text-black', pad: 'pl-[15px]', mark: PILCROW, bullet: 'dot', box: 'w-[27px]', active: true },
  { label: 'Liste 2', cls: 'text-[32px] text-black', pad: 'pl-[33px]', mark: PILCROW, bullet: 'dash', box: 'w-[36px]' },
  { label: 'Liste 3', cls: 'text-[32px] text-black', pad: 'pl-[54px]', mark: PILCROW, bullet: 'square', box: 'w-[26px]' },
  { label: 'Liste 4', cls: 'text-[32px] text-black', pad: 'pl-[72px]', mark: PILCROW, bullet: 'ring', box: 'w-[26px]' },
  { label: 'Liste 5', cls: 'text-[32px] text-black', pad: 'pl-[90px]', mark: PILCROW, bullet: 'short', box: 'w-[27px]' },
  { label: 'Listenfortsetzung', cls: 'text-[32px] text-black', pad: 'pl-[33px]', mark: PILCROW },
  { label: 'Listenfortsetzung 2', cls: 'text-[32px] text-black', pad: 'pl-[52px]', mark: PILCROW },
  { label: 'Listenfortsetzung 3', cls: 'text-[32px] text-black', pad: 'pl-[70px]', mark: PILCROW },
];

const StyleMark = ({ kind }: { kind: string }) =>
  kind === LINKED ? (
    <span className="block -mt-[4px] font-['Liberation_Sans',sans-serif] text-[14px] leading-none text-[#808080] underline">¶a</span>
  ) : (
    <span className="block -mt-[4px] font-['Liberation_Sans',sans-serif] font-bold text-[15px] leading-none text-[#808080]">¶</span>
  );

const IconBtn = ({ children }: { children: React.ReactNode }) => (
  <div className="w-[52px] h-[51px] bg-white border-2 border-[#8a8a8a] flex items-center justify-center shrink-0">{children}</div>
);

const StylesPane = () => (
  <div className="flex-1 text-[#444] pl-[19px] pr-[17px]">
    <div className="h-[85px] flex items-start pt-[16px] pr-[13px]">
      <div className="text-[42px] font-light text-[#222] leading-[50px] whitespace-nowrap">Formatvorlagen</div>
      <div className="ml-auto mt-[16px]">
        <PaneChevron />
      </div>
      <div className="ml-[58px] mt-[12px]">
        <Close />
      </div>
    </div>
    <div className="h-[1182px] bg-white overflow-hidden font-['Liberation_Sans',sans-serif]">
      <div className="h-[74px] pl-[15px] pt-[24px] text-[20.500px] leading-[28px] text-black font-['Open_Sans',sans-serif] tracking-[-0.2px]">Alle löschen</div>
      {STYLES.map((s) => (
        <div
          key={s.label}
          className={`w-[582px] h-[74px] flex items-center pr-[4px] whitespace-nowrap ${s.pad} ${s.active ? 'ring-4 ring-inset ring-[#2b579a]' : ''}`}
        >
          {s.bullet && (
            <div className={`shrink-0 ${s.box}`}>
              <Bullet kind={s.bullet} />
            </div>
          )}
          <span className={s.cls}>{s.label}</span>
          <span className="ml-auto">
            <StyleMark kind={s.mark} />
          </span>
        </div>
      ))}
    </div>
    <div className="mt-[12px] flex items-center h-[26px]">
      <div className="w-[26px] h-[26px] bg-[#2b579a] border-2 border-[#1f4586] flex items-center justify-center">
        <svg width="16" height="13" viewBox="0 0 16 13">
          <path d="M1 7l5 4 9-10" fill="none" stroke="#fff" strokeWidth="2" />
        </svg>
      </div>
      <span className="ml-[10px] whitespace-nowrap">Vorschau anzeigen</span>
    </div>
    <div className="mt-[22px] flex items-center h-[26px]">
      <div className="w-[26px] h-[26px] bg-white border-2 border-[#777]" />
      <span className="ml-[10px] whitespace-nowrap">Verknüpfte Formatvorlagen deaktivieren</span>
    </div>
    <div className="mt-[19px] flex items-start gap-[17px]">
      <IconBtn>
        <svg width="34" height="32" viewBox="0 0 34 32">
          <text x="3" y="23" fontFamily="Open Sans" fontSize="24" fontStyle="italic" fill="#8e63b8">A</text>
          <text x="14" y="27" fontFamily="Open Sans" fontSize="24" fontStyle="italic" fill={ICON}>A</text>
          <path d="M2 1l8 8M10 1L2 9M6 0v10M1 5h10" stroke="#efc77f" strokeWidth="1.500" />
          <path d="M14 30h19" stroke={ICON} strokeWidth="1.500" />
        </svg>
      </IconBtn>
      <IconBtn>
        <svg width="34" height="34" viewBox="0 0 34 34">
          <text x="0" y="18" fontFamily="Open Sans" fontSize="23" fontStyle="italic" fill="#8e63b8">A</text>
          <text x="9" y="25" fontFamily="Open Sans" fontSize="23" fontStyle="italic" fill={ICON}>A</text>
          <circle cx="26" cy="23" r="5.500" fill="#fff" stroke="#777" strokeWidth="1.500" />
          <path d="M22 27l-5 5" stroke="#777" strokeWidth="2" />
        </svg>
      </IconBtn>
      <IconBtn>
        <svg width="34" height="34" viewBox="0 0 34 34">
          <text x="0" y="18" fontFamily="Open Sans" fontSize="23" fontStyle="italic" fill="#8e63b8">A</text>
          <text x="9" y="25" fontFamily="Open Sans" fontSize="23" fontStyle="italic" fill={ICON}>A</text>
          <path d="M11 32l3-8 15-13 4 4-14 13z" fill="#5a8ac6" />
        </svg>
      </IconBtn>
      <div className="w-[150px] h-[48px] bg-white border-2 border-[#8a8a8a] flex items-center justify-center text-[#333]">Optionen...</div>
    </div>
  </div>
);

const StatusBar = () => (
  <div className="h-[42px] bg-[#f3f3f3] border-t-2 border-[#c6c6c6] box-content flex items-center text-[20px] text-[#444] whitespace-nowrap">
    <span className="ml-[23px] mt-[3px]">Seite 6 von 8</span>
    <span className="ml-[38px] mt-[3px]">12 von 154 Wörtern</span>
    <svg width="28" height="24" viewBox="0 0 28 24" className="ml-[32px] -mt-[7px]">
      <path d="M1 1h14v22H1zM1 1h6M1 23h6M8 1v22" fill="none" stroke="#888" strokeWidth="1.300" />
      <path d="M14 9l4 7 8-15" fill="none" stroke="#666" strokeWidth="2.200" />
    </svg>
    <span className="ml-[36px] mt-[3px]">Deutsch (Deutschland)</span>
    <svg width="26" height="24" viewBox="0 0 26 24" className="ml-[38px]">
      <circle cx="5" cy="5" r="5" fill="#555" />
      <rect x="8" y="2" width="17" height="5" fill="#555" />
      <rect x="1" y="8" width="24" height="15" fill="#fff" stroke="#555" strokeWidth="1.200" />
      <path d="M5 12h16M5 15h16M5 18h16M10 10v11M16 10v11" stroke="#777" strokeWidth="1" strokeDasharray="2 1" />
    </svg>
    <svg width="28" height="30" viewBox="0 0 28 30" className="ml-[39px]">
      <path d="M9 3a11 11 0 0 0-3 18" fill="none" stroke="#555" strokeWidth="1.500" strokeDasharray="3 2" />
      <path d="M10 0v14" stroke="#555" strokeWidth="1.500" />
      <path d="M8 12l13 17M22 11L8 29M14 14l5 5 7-4" fill="none" stroke="#444" strokeWidth="2.200" />
    </svg>
    <span className="ml-[5px] mt-[3px] font-bold text-[#333] text-[19px]">Barrierefreiheit: Untersuchen</span>
    <svg width="28" height="24" viewBox="0 0 28 24" className="ml-auto">
      <path d="M1 1h12v20H1zM15 1h12v20H15z" fill="none" stroke="#777" strokeWidth="1.300" />
      <path d="M3 5h8M3 9h8M3 13h8M3 17h8M17 5h8M17 9h8M17 13h8M17 17h8" stroke="#777" strokeWidth="1.300" />
    </svg>
    <div className="ml-[27px] w-[80px] self-stretch bg-[#c6c6c6] flex items-center justify-center">
      <svg width="27" height="25" viewBox="0 0 27 25">
        <rect x="1" y="1" width="25" height="23" fill="none" stroke="#777" strokeWidth="1.300" />
        <path d="M4 5h19M4 9h19M4 13h19M4 17h19M4 21h19" stroke="#777" strokeWidth="1.300" />
      </svg>
    </div>
    <svg width="30" height="28" viewBox="0 0 30 28" className="ml-[27px]">
      <rect x="1" y="1" width="21" height="21" fill="none" stroke="#777" strokeWidth="1.300" />
      <path d="M4 6h15M4 10h15M4 14h10M4 18h8" stroke="#777" strokeWidth="1.300" />
      <circle cx="21" cy="19" r="8.500" fill="#888" />
      <path d="M17 13l5 3-3 3 3 6M24 12l3 5-3 2" stroke="#fff" strokeWidth="1.500" fill="none" />
    </svg>
    <div className="ml-[37px] w-[15px] h-[2px] bg-[#666]" />
    <div className="ml-[12px] w-[198px] h-[3px] bg-[#333] relative">
      <div className="absolute left-[98px] -top-[4px] w-[2px] h-[11px] bg-[#333]" />
      <div className="absolute left-[113px] -top-[10px] w-[10px] h-[23px] bg-[#444]" />
    </div>
    <svg width="15" height="15" viewBox="0 0 15 15" className="ml-[11px]">
      <path d="M0 7.500h15M7.500 0v15" stroke="#555" strokeWidth="1.500" />
    </svg>
    <span className="ml-[27px] mr-[37px] mt-[3px]">180 %</span>
  </div>
);

export default function App() {
  return (
    <div className="w-[2887px] h-[1808px] overflow-hidden flex flex-col bg-[#2b579a] font-['Open_Sans',sans-serif] text-[22.5px]">
      <TitleBar />
      <TabRow />
      <div className="flex-1 min-h-0 mx-[2px] mb-[2px] flex flex-col bg-[#e6e6e6]">
        <Ribbon />
        <div className="h-[3px] bg-[#c9c9c9]" />
        <div className="h-[1445px] flex">
          <NavPane />
          <Center />
          <StylesPane />
        </div>
        <StatusBar />
      </div>
    </div>
  );
}
